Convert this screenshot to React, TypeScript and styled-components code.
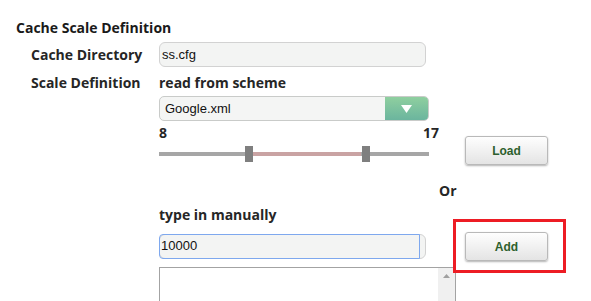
import React from "react";
import styled, { createGlobalStyle } from "styled-components";

const GlobalStyle = createGlobalStyle`
  html, body {
    margin: 0;
    padding: 0;
    background: #ffffff;
  }
  body {
    font-family: "Open Sans", "Liberation Sans", Arial, sans-serif;
    color: #262626;
  }
`;

const Page = styled.div`
  width: 591px;
  height: 301px;
  overflow: hidden;
  padding: 18px 0 0 16px;
  box-sizing: border-box;
`;

const Title = styled.div`
  font-size: 14px;
  font-weight: 700;
  line-height: 20px;
  color: #1a1a1a;
`;

const Form = styled.div`
  display: grid;
  grid-template-columns: 128px auto;
  row-gap: 6px;
  margin-top: 4px;
  padding-left: 15px;
`;

const Label = styled.div<{ $center?: boolean }>`
  font-size: 14px;
  font-weight: 700;
  line-height: 20px;
  align-self: ${({ $center }) => ($center ? "center" : "start")};
  white-space: nowrap;
`;

const Column = styled.div`
  display: flex;
  flex-direction: column;
  align-items: flex-start;
`;

const Caption = styled.div<{ $indent?: number; $top?: number }>`
  font-size: 14px;
  font-weight: 700;
  line-height: 20px;
  margin-left: ${({ $indent }) => $indent ?? 0}px;
  margin-top: ${({ $top }) => $top ?? 0}px;
`;

const TextBox = styled.div`
  width: 267px;
  height: 25px;
  box-sizing: border-box;
  border: 1px solid #d2d2d2;
  border-radius: 6px;
  background: #f3f4f3;
  font-family: "Liberation Sans", Arial, sans-serif;
  font-size: 13px;
  line-height: 23px;
  padding-left: 2px;
  color: #111;
`;

const FocusShell = styled.div`
  display: flex;
  width: 267px;
  height: 25px;
  box-sizing: border-box;
  border: 1px solid #d2d2d2;
  border-radius: 6px;
  background: #f3f4f3;
`;

const FocusField = styled.div`
  width: 261px;
  margin: -1px;
  box-sizing: border-box;
  border: 1.5px solid #7ea8ee;
  border-radius: 4px 0 0 4px;
  font-family: "Liberation Sans", Arial, sans-serif;
  font-size: 13px;
  line-height: 22px;
  padding-left: 1px;
  color: #111;
`;

const Select = styled.div`
  display: flex;
  width: 270px;
  height: 25px;
  margin-top: 3px;
  box-sizing: border-box;
  border: 1px solid #c9cbc9;
  border-radius: 5px;
  background: #f4f5f4;
  overflow: hidden;
`;

const SelectValue = styled.div`
  flex: 1;
  font-family: "Liberation Sans", Arial, sans-serif;
  font-size: 13px;
  line-height: 23px;
  padding-left: 5px;
  color: #111;
`;

const SelectArrow = styled.div`
  width: 43px;
  display: flex;
  align-items: center;
  justify-content: center;
  background: linear-gradient(#8fcf9f, #6bb59e);
`;

const SliderRow = styled.div`
  display: flex;
  align-items: flex-start;
  margin-top: 3px;
`;

const Slider = styled.div`
  width: 280px;
`;

const SliderLabels = styled.div`
  display: flex;
  justify-content: space-between;
  font-size: 14px;
  font-weight: 700;
  line-height: 18px;
`;

const Track = styled.div`
  position: relative;
  width: 270px;
  height: 16px;
  margin-top: 4px;
  display: flex;
  align-items: center;
`;

const Rail = styled.div`
  width: 100%;
  height: 4px;
  background: #a6a6a6;
`;

const Range = styled.div`
  position: absolute;
  top: 6px;
  height: 4px;
  background: #c9a3a3;
`;

const Handle = styled.div`
  position: absolute;
  top: 0;
  width: 8px;
  height: 16px;
  background: #7f7f7f;
`;

const Button = styled.button<{ $top?: number; $left?: number }>`
  width: 83px;
  height: 29px;
  margin-top: ${({ $top }) => $top ?? 0}px;
  margin-left: ${({ $left }) => $left ?? 0}px;
  box-sizing: border-box;
  border: 1px solid #b9b9b9;
  border-radius: 3px;
  background: linear-gradient(#fefefe, #e4e4e4);
  box-shadow: 0 1px 2px rgba(0, 0, 0, 0.3);
  font-family: "Liberation Sans", Arial, sans-serif;
  font-size: 12px;
  font-weight: 700;
  color: #2d5f2d;
  padding: 0;
`;

const InputRow = styled.div`
  display: flex;
  align-items: center;
  gap: 39px;
  margin-top: 7px;
`;

const Highlight = styled.div`
  position: relative;
  display: flex;
  &::after {
    content: "";
    position: absolute;
    top: -13px;
    left: -12px;
    right: -18px;
    bottom: -12px;
    border: 3px solid #ed1c24;
    pointer-events: none;
  }
`;

const ListBox = styled.div`
  display: flex;
  width: 297px;
  height: 100px;
  margin-top: 6px;
  box-sizing: border-box;
  border: 1px solid #a3a3a3;
  background: #fff;
`;

const ListBody = styled.div`
  flex: 1;
`;

const ScrollBar = styled.div`
  width: 17px;
  background: #f0f0f0;
  display: flex;
  justify-content: center;
  padding-top: 6px;
`;

const SliderTrack: React.FC<{ min: number; max: number; from: number; to: number }> = ({
  min,
  max,
  from,
  to,
}) => {
  const width = 270;
  const pos = (v: number) => ((v - min) / (max - min)) * width;
  const a = pos(from);
  const b = pos(to);
  return (
    <Track>
      <Rail />
      <Range style={{ left: a + 8, width: b - a - 8 }} />
      <Handle style={{ left: a }} />
      <Handle style={{ left: b }} />
    </Track>
  );
};

export default function App() {
  return (
    <Page>
      <GlobalStyle />
      <Title>Cache Scale Definition</Title>
      <Form>
        <Label $center>Cache Directory</Label>
        <TextBox>ss.cfg</TextBox>

        <Label>Scale Definition</Label>
        <Column>
          <Caption>read from scheme</Caption>
          <Select>
            <SelectValue>Google.xml</SelectValue>
            <SelectArrow>
              <svg width="11" height="8" viewBox="0 0 11 8">
                <path d="M0 0 H11 L5.5 8 Z" fill="#ffffff" />
              </svg>
            </SelectArrow>
          </Select>
          <SliderRow>
            <Slider>
              <SliderLabels>
                <span>8</span>
                <span>17</span>
              </SliderLabels>
              <SliderTrack min={0} max={19.6} from={6.25} to={14.7} />
            </Slider>
            <Button $top={12} $left={26}>Load</Button>
          </SliderRow>
          <Caption $indent={280} $top={16}>Or</Caption>
          <Caption $top={4}>type in manually</Caption>
          <InputRow>
            <FocusShell>
              <FocusField>10000</FocusField>
            </FocusShell>
            <Highlight>
              <Button>Add</Button>
            </Highlight>
          </InputRow>
          <ListBox>
            <ListBody />
            <ScrollBar>
              <svg width="7" height="4" viewBox="0 0 7 4">
                <path d="M0 4 L3.5 0 L7 4 Z" fill="#a0a0a0" />
              </svg>
            </ScrollBar>
          </ListBox>
        </Column>
      </Form>
    </Page>
  );
}
